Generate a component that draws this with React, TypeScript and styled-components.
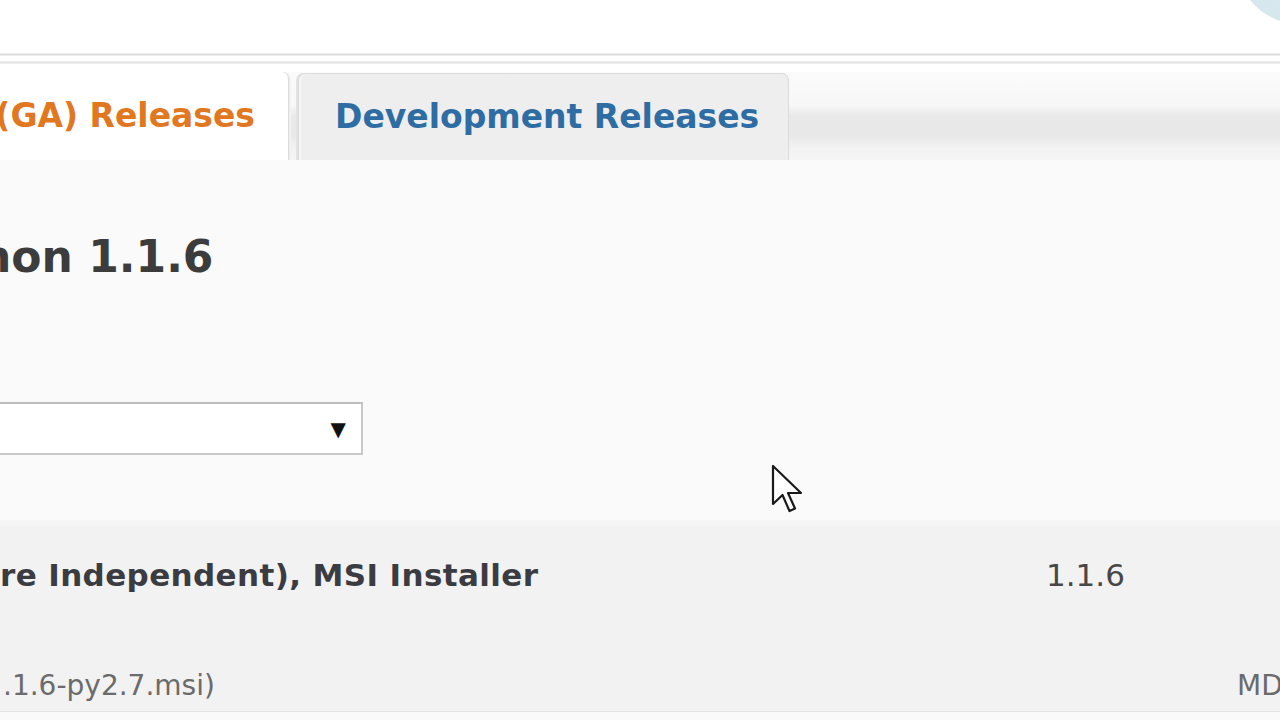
import React from "react";
import styled, { createGlobalStyle } from "styled-components";

const GlobalStyle = createGlobalStyle`
  html, body { margin: 0; padding: 0; background: #ffffff; overflow: hidden; }
  body { font-family: "DejaVu Sans", Verdana, "Liberation Sans", sans-serif; }
`;

const Page = styled.div`
  position: relative;
  width: 1280px;
  height: 720px;
  overflow: hidden;
  background: #fafafa;
  display: flex;
  flex-direction: column;
`;

const Header = styled.header`
  position: relative;
  height: 53px;
  background: #ffffff;
  overflow: hidden;
`;

const Bubble = styled.div`
  position: absolute;
  left: 1236px;
  top: -104px;
  width: 128px;
  height: 128px;
  border-radius: 50%;
  background: radial-gradient(circle at 40% 60%, #dcebf1 0%, #d2e4eb 70%);
`;

const Rule = styled.div<{ $h: number; $c: string; $gap: number }>`
  height: ${(p) => p.$h}px;
  background: linear-gradient(to bottom, #f4f4f4, ${(p) => p.$c}, #f4f4f4);
  margin-bottom: ${(p) => p.$gap}px;
`;

const RuleArea = styled.div`
  background: #ffffff;
  display: flex;
  flex-direction: column;
`;

const TabBar = styled.nav`
  display: flex;
  align-items: flex-end;
  gap: 9px;
  height: 88px;
  background: linear-gradient(
    to bottom,
    #fbfbfb 0%,
    #f7f7f7 38%,
    #e9e9e9 50%,
    #e8e8e8 72%,
    #f2f2f2 86%,
    #f5f5f5 100%
  );
`;

const TabBase = styled.div`
  height: 100%;
  box-sizing: border-box;
  display: flex;
  align-items: center;
  white-space: nowrap;
  font-weight: bold;
  font-size: 33px;
  line-height: 33px;
  padding-bottom: 2px;
`;

const ActiveTab = styled(TabBase)`
  width: 289px;
  justify-content: flex-end;
  padding-right: 33px;
  background: #ffffff;
  color: #e1771f;
  border-right: 1px solid #dcdcdc;
  border-top-right-radius: 7px;
  box-shadow: 1px 0 0 #ececec, 2px 0 0 #f4f4f4;
`;

const Tab = styled(TabBase)`
  width: 491px;
  height: 87px;
  padding-left: 36px;
  background: #eeeeee;
  color: #2e6da4;
  border: 1px solid #dadada;
  border-bottom: none;
  border-radius: 7px 7px 0 0;
  box-shadow: inset 2px 0 0 #f6f6f6, -2px 0 0 #e4e4e4;
`;

const Content = styled.main`
  flex: 0 0 360px;
  display: flex;
  flex-direction: column;
  background: #fafafa;
`;

const Title = styled.h1`
  margin: 75px 0 0 -20px;
  font-size: 44px;
  line-height: 44px;
  font-weight: bold;
  color: #3c3c3c;
  white-space: nowrap;
`;

const Select = styled.div`
  margin: 123px 0 0 -10px;
  width: 373px;
  height: 53px;
  box-sizing: border-box;
  background: #ffffff;
  border: 2px solid #c8c8c8;
  border-top-color: #bdbdbd;
  display: flex;
  align-items: center;
  justify-content: flex-end;
  padding-right: 15px;
`;

const Caret = styled.span`
  font-size: 20px;
  line-height: 20px;
  color: #111111;
`;

const Row = styled.section`
  height: 192px;
  box-sizing: border-box;
  background: #f2f2f2;
  border-top: 6px solid #f5f5f5;
  border-bottom: 1px solid #e4e4e4;
  display: grid;
  grid-template-columns: 1046px 191px 1fr;
  grid-template-rows: 112px 1fr;
  padding-top: 34px;
`;

const Name = styled.div`
  font-size: 31px;
  line-height: 31px;
  font-weight: bold;
  letter-spacing: 0.38px;
  color: #3b3b42;
  white-space: nowrap;
`;

const Version = styled.div`
  font-size: 31px;
  line-height: 31px;
  color: #474747;
`;

const File = styled.div`
  font-size: 28px;
  line-height: 28px;
  color: #6b6b6b;
  white-space: nowrap;
  margin-left: 3px;
`;

const Md = styled.div`
  grid-column: 3;
  font-size: 28px;
  line-height: 28px;
  color: #6a6a6a;
  white-space: nowrap;
`;

const Cursor = styled.svg`
  position: absolute;
  left: 771px;
  top: 464px;
  pointer-events: none;
`;

export default function App() {
  return (
    <>
      <GlobalStyle />
      <Page>
        <Header>
          <Bubble />
        </Header>
        <RuleArea>
          <Rule $h={3} $c="#dedede" $gap={5} />
          <Rule $h={3} $c="#e2e2e2" $gap={8} />
        </RuleArea>
        <TabBar>
          <ActiveTab>(GA) Releases</ActiveTab>
          <Tab>Development Releases</Tab>
        </TabBar>
        <Content>
          <Title>hon 1.1.6</Title>
          <Select>
            <Caret>▼</Caret>
          </Select>
        </Content>
        <Row>
          <Name>re Independent), MSI Installer</Name>
          <Version>1.1.6</Version>
          <div />
          <File>.1.6-py2.7.msi)</File>
          <div />
          <Md>MD5:</Md>
        </Row>
        <Cursor width="34" height="50" viewBox="0 0 34 50">
          <path
            d="M2 2 L2 40 L11.5 31 L18.5 47 L24 44.5 L17 29 L30 29 Z"
            fill="#ffffff"
            stroke="#1a1a1a"
            strokeWidth="2.2"
            strokeLinejoin="round"
          />
        </Cursor>
      </Page>
    </>
  );
}
